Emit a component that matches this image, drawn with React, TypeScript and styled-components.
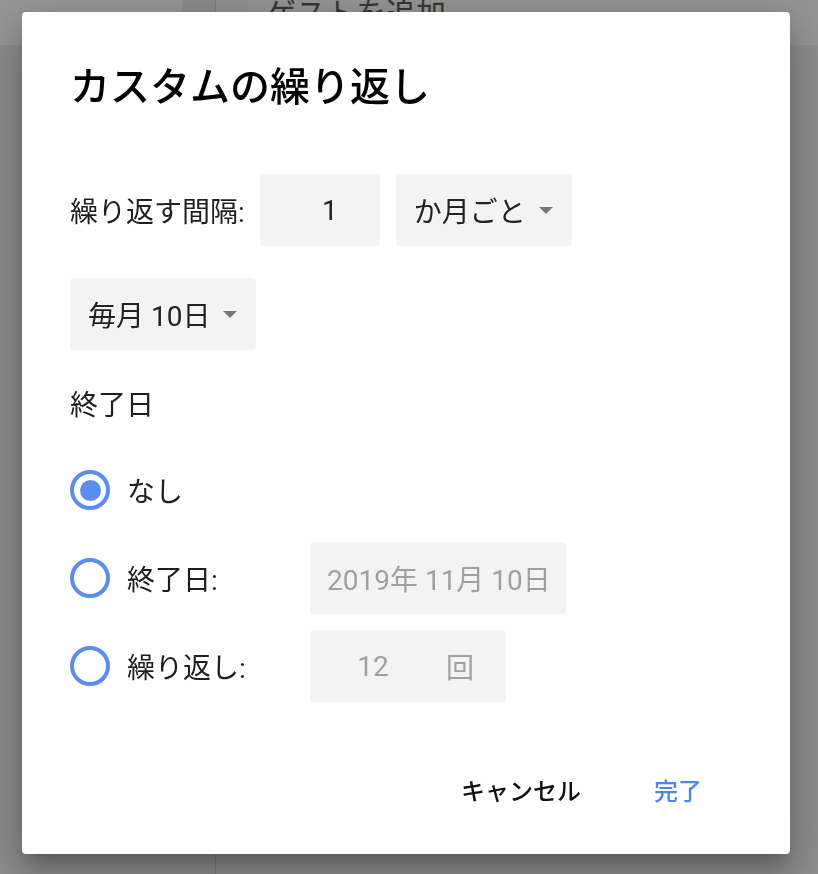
import React, { FC, useState } from "react";
import styled, { createGlobalStyle } from "styled-components";

type EndMode = "none" | "date" | "count";

const GlobalStyle = createGlobalStyle`
  html, body {
    margin: 0;
    height: 100%;
  }
  body {
    font-family: Roboto, "Noto Sans CJK JP", "Noto Sans", sans-serif;
    color: #202124;
    overflow: hidden;
  }
`;

// page that sits behind the modal
const Shell = styled.div`
  display: flex;
  height: 100vh;
  background: #ececec;
`;

const Sidebar = styled.div`
  width: 215px;
  border-right: 1px solid #d2d2d2;
  display: flex;
  flex-direction: column;
`;

const SidebarTop = styled.div`
  display: flex;
  height: 45px;
`;

const SidebarTab = styled.div<{ $tone: string; $width: string }>`
  background: ${(p) => p.$tone};
  flex: ${(p) => p.$width};
`;

const Main = styled.div`
  flex: 1;
  display: flex;
  flex-direction: column;
`;

const MainTop = styled.div`
  display: flex;
  height: 45px;
`;

const MainGutter = styled.div`
  width: 32px;
  background: #efefef;
`;

const GuestField = styled.div`
  flex: 1;
  background: #f8f8f8;
  padding-left: 18px;
  font-size: 30px;
  line-height: 36px;
  margin-top: -4px;
  color: #5a5a5a;
  overflow: hidden;
  white-space: nowrap;
`;

// modal
const Overlay = styled.div`
  position: fixed;
  inset: 0;
  background: rgba(0, 0, 0, 0.4);
  display: flex;
  align-items: flex-start;
  padding: 12px 0 0 22px;
  box-sizing: border-box;
`;

const Dialog = styled.div`
  width: 768px;
  background: #fff;
  border-radius: 4px;
  box-shadow: 0 11px 15px -7px rgba(0, 0, 0, 0.22),
    0 24px 38px 3px rgba(0, 0, 0, 0.16), 0 9px 46px 8px rgba(0, 0, 0, 0.14);
  padding: 52px 48px 29px;
  box-sizing: border-box;
  display: flex;
  flex-direction: column;
`;

const Title = styled.h2`
  margin: 0;
  font-size: 40px;
  line-height: 48px;
  font-weight: 500;
  color: #000;
`;

const IntervalRow = styled.div`
  display: flex;
  align-items: center;
  margin-top: 62px;
`;

const FieldLabel = styled.span`
  font-size: 28px;
  color: #1f1f1f;
  margin-right: 15px;
  white-space: nowrap;
`;

const Field = styled.div<{ $width: number; $muted?: boolean }>`
  width: ${(p) => p.$width}px;
  height: 72px;
  flex-shrink: 0;
  box-sizing: border-box;
  background: #f3f3f3;
  border-radius: 4px;
  display: flex;
  align-items: center;
  font-size: 28px;
  white-space: nowrap;
  color: ${(p) => (p.$muted ? "#a0a0a0" : "#222")};
`;

const NumberField = styled(Field)`
  justify-content: center;
  padding-left: 20px;
  margin-right: 16px;
`;

const SelectField = styled(Field)`
  padding: 0 16px 0 18px;
  gap: 13px;
  cursor: pointer;
`;

const Caret = styled.span`
  width: 0;
  height: 0;
  flex-shrink: 0;
  border-left: 7px solid transparent;
  border-right: 7px solid transparent;
  border-top: 7px solid #777;
`;

const DayRow = styled.div`
  display: flex;
  margin-top: 32px;
`;

const SectionLabel = styled.div`
  font-size: 28px;
  line-height: 42px;
  color: #1f1f1f;
  margin: 35px 0 27px;
`;

const RadioList = styled.div`
  display: flex;
  flex-direction: column;
  gap: 16px;
`;

const RadioRow = styled.label`
  display: flex;
  align-items: center;
  height: 72px;
  cursor: pointer;
`;

const Radio = styled.span<{ $checked: boolean }>`
  width: 40px;
  height: 40px;
  border-radius: 50%;
  border: 4px solid #5b8def;
  box-sizing: border-box;
  display: flex;
  align-items: center;
  justify-content: center;
  margin-right: 17px;
  flex-shrink: 0;

  &::after {
    content: "";
    width: 21px;
    height: 21px;
    border-radius: 50%;
    background: #5b8def;
    display: ${(p) => (p.$checked ? "block" : "none")};
  }
`;

const RadioText = styled.span`
  width: 183px;
  font-size: 28px;
  color: #1f1f1f;
`;

const DateField = styled(Field)`
  padding-left: 17px;
`;

const CountValue = styled.span`
  width: 126px;
  text-align: center;
`;

const CountUnit = styled.span`
  margin-left: 10px;
`;

const Footer = styled.div`
  display: flex;
  justify-content: flex-end;
  gap: 25px;
  margin: 51px 16px 0 0;
  height: 72px;
`;

const TextButton = styled.button<{ $primary?: boolean }>`
  border: none;
  background: transparent;
  padding: 0 24px;
  font-family: inherit;
  font-size: 24px;
  font-weight: 500;
  color: ${(p) => (p.$primary ? "#4f86ec" : "#111")};
  cursor: pointer;
`;

const BackgroundPage: FC = () => (
  <Shell>
    <Sidebar>
      <SidebarTop>
        <SidebarTab $tone="#fbfbfb" $width="0 0 182px" />
        <SidebarTab $tone="#e9e9e9" $width="1" />
      </SidebarTop>
    </Sidebar>
    <Main>
      <MainTop>
        <MainGutter />
        <GuestField>ゲストを追加</GuestField>
      </MainTop>
    </Main>
  </Shell>
);

const App: FC = () => {
  const [mode, setMode] = useState<EndMode>("none");

  return (
    <>
      <GlobalStyle />
      <BackgroundPage />
      <Overlay>
        <Dialog>
          <Title>カスタムの繰り返し</Title>

          <IntervalRow>
            <FieldLabel>繰り返す間隔:</FieldLabel>
            <NumberField $width={120}>1</NumberField>
            <SelectField $width={176}>
              か月ごと
              <Caret />
            </SelectField>
          </IntervalRow>

          <DayRow>
            <SelectField $width={186}>
              毎月 10日
              <Caret />
            </SelectField>
          </DayRow>

          <SectionLabel>終了日</SectionLabel>

          <RadioList>
            <RadioRow onClick={() => setMode("none")}>
              <Radio $checked={mode === "none"} />
              <RadioText>なし</RadioText>
            </RadioRow>
            <RadioRow onClick={() => setMode("date")}>
              <Radio $checked={mode === "date"} />
              <RadioText>終了日:</RadioText>
              <DateField $width={256} $muted={mode !== "date"}>
                2019年 11月 10日
              </DateField>
            </RadioRow>
            <RadioRow onClick={() => setMode("count")}>
              <Radio $checked={mode === "count"} />
              <RadioText>繰り返し:</RadioText>
              <Field $width={196} $muted={mode !== "count"}>
                <CountValue>12</CountValue>
                <CountUnit>回</CountUnit>
              </Field>
            </RadioRow>
          </RadioList>

          <Footer>
            <TextButton>キャンセル</TextButton>
            <TextButton $primary>完了</TextButton>
          </Footer>
        </Dialog>
      </Overlay>
    </>
  );
};

export default App;
